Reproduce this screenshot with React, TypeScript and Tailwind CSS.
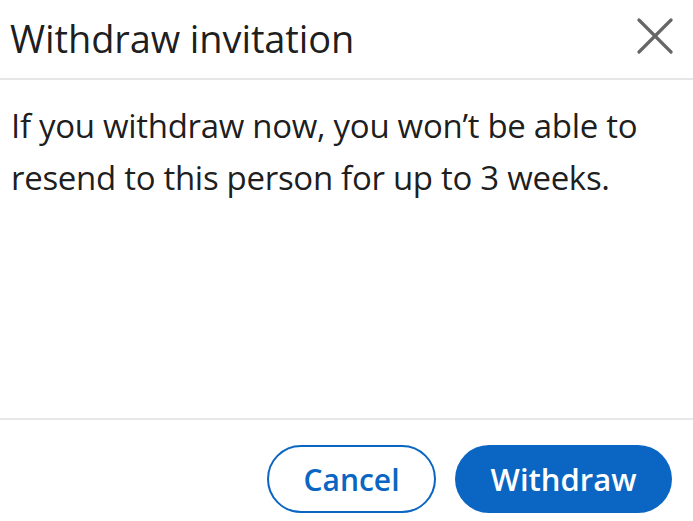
import React from 'react';

const CloseIcon: React.FC = () => (
  <svg width="36" height="36" viewBox="0 0 36 36" fill="none" stroke="#666666" strokeWidth={3.2} strokeLinecap="round">
    <line x1="2" y1="2" x2="34" y2="34" />
    <line x1="34" y1="2" x2="2" y2="34" />
  </svg>
);

export default function App() {
  return (
    <div className="w-[693px] h-[521px] flex flex-col bg-white overflow-hidden font-['Open_Sans',sans-serif]">
      {/* Header */}
      <div className="h-[80px] flex items-center justify-between pl-[10px] pr-[20px] border-b-2 border-[#e6e6e6] shrink-0">
        <h2 className="text-[38px] leading-none text-black/90 tracking-[-0.1px] mb-[3px]">Withdraw invitation</h2>
        <button aria-label="Dismiss" className="w-[36px] h-[36px] flex items-center justify-center mb-[7px]">
          <CloseIcon />
        </button>
      </div>

      {/* Body */}
      <div className="flex-1 pl-[11px] pr-[30px] pt-[20px]">
        <p className="text-[33px] leading-[52px] text-black/90 tracking-[-0.3px]">
          If you withdraw now, you won’t be able to resend to this person for up to 3 weeks.
        </p>
      </div>

      {/* Footer */}
      <div className="h-[103px] shrink-0 border-t-2 border-[#e8e8e8] flex justify-end items-start gap-[19px] pr-[21px] pt-[25px]">
        <button className="w-[169px] h-[68px] rounded-full border-2 border-[#0a66c2] text-[#0a66c2] text-[30px] font-semibold">
          Cancel
        </button>
        <button className="w-[217px] h-[68px] rounded-full bg-[#0a66c2] text-white text-[31px] font-semibold">
          Withdraw
        </button>
      </div>
    </div>
  );
}
